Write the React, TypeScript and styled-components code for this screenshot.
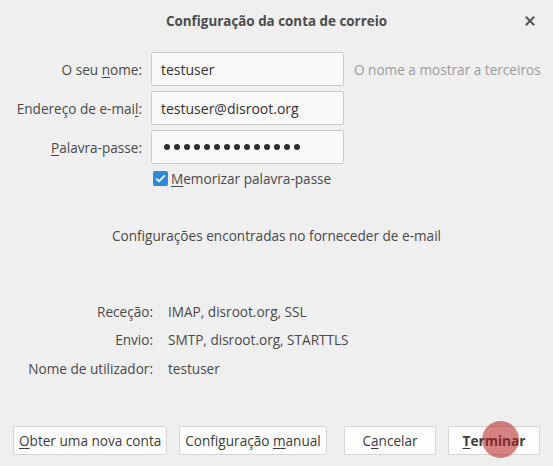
import React from 'react';
import styled, { createGlobalStyle } from 'styled-components';

const GlobalStyle = createGlobalStyle`
  html, body {
    margin: 0;
    padding: 0;
    background: #efefef;
  }
  body {
    font-family: "Open Sans", "Noto Sans", sans-serif;
    font-size: 13.6px;
    color: #4a4a4a;
  }
`;

const Window = styled.div`
  position: relative;
  width: 553px;
  height: 466px;
  display: flex;
  flex-direction: column;
  background: #efefef;
  overflow: hidden;
`;

const TitleBar = styled.div`
  height: 42px;
  display: grid;
  grid-template-columns: 1fr auto 1fr;
  align-items: center;
`;

const Title = styled.div`
  grid-column: 2;
  font-weight: bold;
  color: #4c4c4c;
  font-size: 13.4px;
`;

const CloseButton = styled.div`
  justify-self: end;
  margin-right: 17px;
  width: 12px;
  height: 12px;
  display: flex;
  align-items: center;
  justify-content: center;
`;

const FormGrid = styled.div`
  display: grid;
  grid-template-columns: 142px 193px 1fr;
  column-gap: 9px;
  row-gap: 5px;
  margin-top: 10px;
  align-items: center;
`;

const Label = styled.label`
  text-align: right;
  color: #4a4a4a;
  white-space: nowrap;
`;

const Field = styled.div`
  height: 34px;
  box-sizing: border-box;
  border: 1px solid #cbcbcb;
  border-radius: 2px;
  background: #f8f8f8;
  padding: 0 9px;
  display: flex;
  align-items: center;
  color: #333;
  font-size: 14px;
`;

const Hint = styled.span`
  color: #9b9b9b;
  white-space: nowrap;
  margin-left: 1px;
`;

const Dots = styled.div`
  display: flex;
  gap: 4px;
  margin-left: 3px;
`;

const Dot = styled.span`
  width: 6px;
  height: 6px;
  border-radius: 50%;
  background: #2e2e2e;
`;

const CheckRow = styled.div`
  grid-column: 2 / span 2;
  display: flex;
  align-items: center;
  gap: 3px;
  padding-left: 2px;
  height: 18px;
`;

const CheckBox = styled.span`
  width: 15px;
  height: 15px;
  border-radius: 2px;
  background: #2d8ad6;
  display: flex;
  align-items: center;
  justify-content: center;
`;

const Found = styled.div`
  text-align: center;
  margin-top: 39px;
  color: #4a4a4a;
`;

const Summary = styled.div`
  display: grid;
  grid-template-columns: 153px 1fr;
  column-gap: 15px;
  grid-auto-rows: 28.5px;
  align-items: center;
  margin-top: 52px;
`;

const SumLabel = styled.span`
  text-align: right;
  white-space: nowrap;
`;

const SumValue = styled.span`
  color: #4a4a4a;
`;

const ButtonRow = styled.div`
  margin-top: auto;
  margin-bottom: 11px;
  padding: 0 13px;
  display: flex;
  align-items: center;
`;

const Group = styled.div`
  display: flex;
  gap: 12px;
`;

const Spacer = styled.div`
  flex: 1;
`;

const Button = styled.div<{ $primary?: boolean }>`
  height: 29px;
  box-sizing: border-box;
  min-width: 92px;
  padding: 0 5px;
  border: 1px solid #d6d6d6;
  border-radius: 2px;
  background: #fdfdfd;
  display: flex;
  align-items: center;
  justify-content: center;
  color: #3c3c3c;
  font-weight: ${p => (p.$primary ? 'bold' : 'normal')};
  white-space: nowrap;
`;

const Key = styled.u`
  text-decoration-thickness: 1px;
  text-underline-offset: 2px;
`;

const ClickMark = styled.div`
  position: absolute;
  left: 482px;
  top: 421px;
  width: 37px;
  height: 37px;
  border-radius: 50%;
  background: rgba(180, 30, 30, 0.55);
  pointer-events: none;
`;

export default function App() {
  return (
    <Window>
      <GlobalStyle />
      <TitleBar>
        <Title>Configuração da conta de correio</Title>
        <CloseButton>
          <svg width="10" height="10" viewBox="0 0 10 10">
            <path d="M1.5 1.5 L8.5 8.5 M8.5 1.5 L1.5 8.5" stroke="#555" strokeWidth="2" strokeLinecap="square" />
          </svg>
        </CloseButton>
      </TitleBar>

      <FormGrid>
        <Label>O seu <Key>n</Key>ome:</Label>
        <Field>testuser</Field>
        <Hint>O nome a mostrar a terceiros</Hint>

        <Label>Endereço de e-mai<Key>l</Key>:</Label>
        <Field>testuser@disroot.org</Field>
        <span />

        <Label><Key>P</Key>alavra-passe:</Label>
        <Field>
          <Dots>
            {Array.from({ length: 14 }).map((_, i) => <Dot key={i} />)}
          </Dots>
        </Field>
        <span />

        <span />
        <CheckRow>
          <CheckBox>
            <svg width="11" height="9" viewBox="0 0 11 9">
              <path d="M1.2 4.6 L4 7.3 L9.8 1.4" fill="none" stroke="#fff" strokeWidth="1.8" />
            </svg>
          </CheckBox>
          <span><Key>M</Key>emorizar palavra-passe</span>
        </CheckRow>
      </FormGrid>

      <Found>Configurações encontradas no forneceder de e-mail</Found>

      <Summary>
        <SumLabel>Receção:</SumLabel>
        <SumValue>IMAP, disroot.org, SSL</SumValue>
        <SumLabel>Envio:</SumLabel>
        <SumValue>SMTP, disroot.org, STARTTLS</SumValue>
        <SumLabel>Nome de utilizador:</SumLabel>
        <SumValue>testuser</SumValue>
      </Summary>

      <ButtonRow>
        <Group>
          <Button><span><Key>O</Key>bter uma nova conta</span></Button>
          <Button><span>Configuração <Key>m</Key>anual</span></Button>
        </Group>
        <Spacer />
        <Group>
          <Button><span>C<Key>a</Key>ncelar</span></Button>
          <Button $primary><span><Key>T</Key>erminar</span></Button>
        </Group>
      </ButtonRow>

      <ClickMark />
    </Window>
  );
}
